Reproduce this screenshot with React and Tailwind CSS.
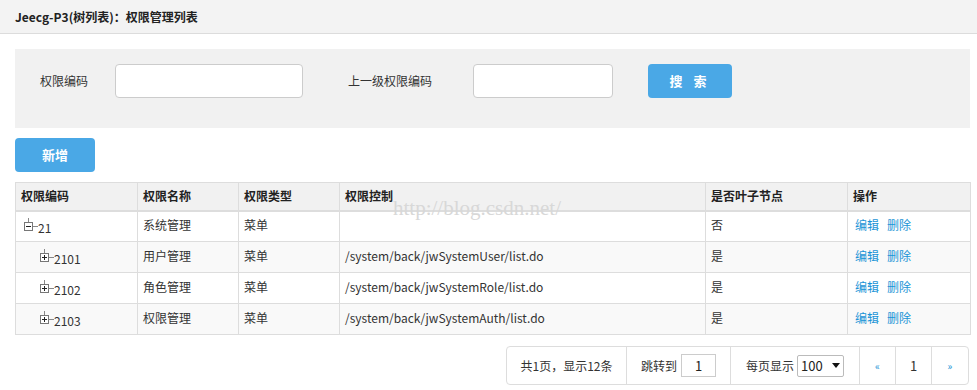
import React from 'react';

const rows = [
  { code: '21', name: '系统管理', type: '菜单', url: '', leaf: '否', level: 0, open: true },
  { code: '2101', name: '用户管理', type: '菜单', url: '/system/back/jwSystemUser/list.do', leaf: '是', level: 1 },
  { code: '2102', name: '角色管理', type: '菜单', url: '/system/back/jwSystemRole/list.do', leaf: '是', level: 1 },
  { code: '2103', name: '权限管理', type: '菜单', url: '/system/back/jwSystemAuth/list.do', leaf: '是', level: 1 },
];

function TreeIcon({ open }) {
  return (
    <svg width="14" height="16" viewBox="0 0 14 16" className="shrink-0">
      <line x1="4.5" y1="0" x2="4.5" y2="4" stroke="#888" strokeWidth="1" />
      <line x1="9" y1="8.5" x2="14" y2="8.5" stroke="#888" strokeWidth="1" />
      <rect x="0.5" y="4.5" width="8" height="8" fill="#fff" stroke="#777" strokeWidth="1" />
      <line x1="2" y1="8.5" x2="7" y2="8.5" stroke="#222" strokeWidth="1" />
      {!open && <line x1="4.5" y1="6" x2="4.5" y2="11" stroke="#222" strokeWidth="1" />}
    </svg>
  );
}

export default function App() {
  const font = { fontFamily: '"Noto Sans CJK SC", "Liberation Sans", sans-serif' };
  return (
    <div className="w-[977px] h-[390px] bg-white text-[#333] overflow-hidden relative" style={font}>
      <div className="h-[34px] bg-[#f3f3f3] border-b border-[#dcdcdc] flex items-center pl-[15px]">
        <span className="text-[12px] font-bold text-[#222]">Jeecg-P3(树列表)：权限管理列表</span>
      </div>

      <div className="ml-[15px] mr-[7px] mt-[15px] h-[79px] bg-[#f1f1f1] pt-[15px] text-[12px]">
        <div className="flex items-center">
          <span className="ml-[25px] w-[75px]">权限编码</span>
          <div className="w-[188px] h-[34px] bg-white border border-[#ccc] rounded-[4px]" />
          <span className="ml-[45px] w-[125px]">上一级权限编码</span>
          <div className="w-[140px] h-[34px] bg-white border border-[#ccc] rounded-[4px]" />
          <button className="ml-[35px] w-[84px] h-[34px] bg-[#4aa8e6] rounded-[4px] text-white text-[13px] font-bold tracking-[4px]">搜 索</button>
        </div>
      </div>

      <button className="ml-[15px] mt-[10px] w-[80px] h-[34px] bg-[#4aa8e6] rounded-[4px] text-white text-[13px] font-bold">新增</button>

      <table className="ml-[15px] mt-[10px] w-[955px] border-collapse text-[12px] table-fixed">
        <colgroup>
          <col className="w-[122px]" />
          <col className="w-[101px]" />
          <col className="w-[101px]" />
          <col className="w-[366px]" />
          <col className="w-[142px]" />
          <col className="w-[123px]" />
        </colgroup>
        <thead>
          <tr className="h-[28px] bg-[#f1f1f1]">
            {['权限编码', '权限名称', '权限类型', '权限控制', '是否叶子节点', '操作'].map((h) => (
              <th key={h} className="border border-[#ddd] border-b-2 text-left font-bold px-[5px] text-[#222]">{h}</th>
            ))}
          </tr>
        </thead>
        <tbody>
          {rows.map((r, i) => (
            <tr key={r.code} className={`h-[31px] ${i % 2 === 1 ? 'bg-[#f9f9f9]' : 'bg-white'}`}>
              <td className="border border-[#ddd] px-[5px]">
                <div className={`flex items-center ${r.level ? 'pl-[19px]' : 'pl-[3px]'}`}>
                  <TreeIcon open={r.open} />
                  <span className="mt-[4px]">{r.code}</span>
                </div>
              </td>
              <td className="border border-[#ddd] px-[5px] pb-[2px]">{r.name}</td>
              <td className="border border-[#ddd] px-[5px] pb-[2px]">{r.type}</td>
              <td className="border border-[#ddd] px-[5px] pb-[2px]">{r.url}</td>
              <td className="border border-[#ddd] px-[5px] pb-[2px]">{r.leaf}</td>
              <td className="border border-[#ddd] px-[7px] pb-[2px] text-[#1a94d6]">
                <span className="mr-[8px]">编辑</span>
                <span>删除</span>
              </td>
            </tr>
          ))}
        </tbody>
      </table>

      <div className="flex justify-end mr-[8px] mt-[11px]">
        <div className="flex h-[39px] border border-[#ddd] rounded-[4px] text-[12px]">
          <div className="w-[120px] flex items-center justify-center border-r border-[#ddd]">共1页，显示12条</div>
          <div className="w-[104px] flex items-center justify-center gap-[4px] border-r border-[#ddd]">
            <span>跳转到</span>
            <div className="w-[35px] h-[23px] border border-[#ccc] flex items-center justify-center text-[13px] text-[#222]">1</div>
          </div>
          <div className="w-[129px] flex items-center justify-center gap-[3px] border-r border-[#ddd]">
            <span>每页显示</span>
            <div className="w-[47px] h-[22px] border border-[#bbb] rounded-[2px] flex items-center justify-between px-[3px] text-[13px] text-[#222]">
              <span>100</span>
              <svg width="8" height="5" viewBox="0 0 8 5"><path d="M0 0h8L4 5z" fill="#111" /></svg>
            </div>
          </div>
          <div className="w-[36px] flex items-center justify-center border-r border-[#ddd] text-[#1a94d6] text-[10px]">«</div>
          <div className="w-[36px] flex items-center justify-center border-r border-[#ddd] text-[13px]">1</div>
          <div className="w-[36px] flex items-center justify-center text-[#1a94d6] text-[10px]">»</div>
        </div>
      </div>

      <div className="absolute left-[393px] top-[193px] text-[21px] text-[#d8d8d8] pointer-events-none" style={{ fontFamily: '"Liberation Serif", serif' }}>
        http://blog.csdn.net/
      </div>
    </div>
  );
}
